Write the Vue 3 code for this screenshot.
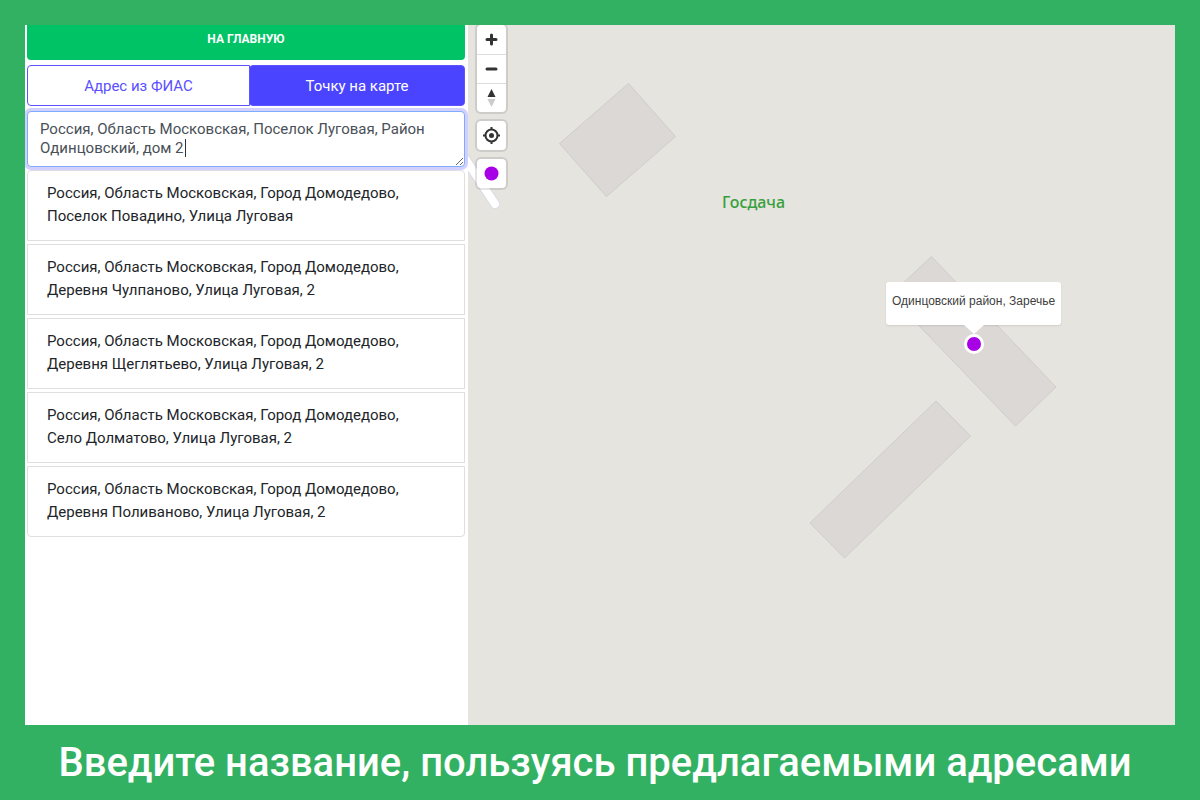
<script setup>
import { ref } from 'vue'

const query = ref('Россия, Область Московская, Поселок Луговая, Район Одинцовский, дом 2')
const mode = ref('map')
const modes = [
  { id: 'fias', label: 'Адрес из ФИАС' },
  { id: 'map', label: 'Точку на карте' },
]
const suggestions = [
  'Россия, Область Московская, Город Домодедово, Поселок Повадино, Улица Луговая',
  'Россия, Область Московская, Город Домодедово, Деревня Чулпаново, Улица Луговая, 2',
  'Россия, Область Московская, Город Домодедово, Деревня Щеглятьево, Улица Луговая, 2',
  'Россия, Область Московская, Город Домодедово, Село Долматово, Улица Луговая, 2',
  'Россия, Область Московская, Город Домодедово, Деревня Поливаново, Улица Луговая, 2',
]
</script>

<template>
  <div class="page">
    <main class="screen">
      <section class="panel">
        <button type="button" class="home">На главную</button>
        <div class="modes">
          <button
            v-for="m in modes"
            :key="m.id"
            type="button"
            class="mode"
            :class="{ active: mode === m.id }"
            :aria-pressed="mode === m.id"
            @click="mode = m.id"
          >{{ m.label }}</button>
        </div>
        <div class="field">
          <textarea v-model="query" class="query" aria-label="Адрес" rows="2" spellcheck="false"></textarea>
          <span class="caret"></span>
        </div>
        <ul class="list">
          <li v-for="s in suggestions" :key="s">
            <button type="button" class="suggestion" @click="query = s">{{ s }}</button>
          </li>
        </ul>
      </section>

      <section class="map" aria-label="Карта">
        <svg class="shapes" width="707" height="700" viewBox="0 0 707 700" aria-hidden="true">
          <path d="M-8 126 27 179" stroke="#dddbe8" stroke-width="10" stroke-linecap="round" />
          <path d="M-8 126 27 179" stroke="#fff" stroke-width="8" stroke-linecap="round" />
          <g fill="#dcd8d5" stroke="#cfcdca" stroke-width="1">
            <path d="M160.500 58.500 207.500 111.500 138.500 171.500 91.500 118.500Z" />
            <path d="M463.500 231.500 588 362 547.500 401 422 270.500Z" />
            <path d="M468 376 502.500 411 376.500 533 342 498Z" />
          </g>
        </svg>
        <span class="place">Госдача</span>

        <div class="controls">
          <div class="group top">
            <button type="button" aria-label="Приблизить">
              <svg width="29" height="29" viewBox="0 0 29 29"><path d="M14.500 10v9M10 14.500h9" stroke="#333" stroke-width="3" stroke-linecap="round" /></svg>
            </button>
            <button type="button" aria-label="Отдалить">
              <svg width="29" height="28" viewBox="0 0 29 28"><path d="M10 14h9" stroke="#333" stroke-width="3" stroke-linecap="round" /></svg>
            </button>
            <button type="button" aria-label="На север">
              <svg width="29" height="28" viewBox="0 0 29 28"><path d="M10.500 13 14.500 5l4 8Z" fill="#333" /><path d="M10.500 15h8l-4 8Z" fill="#ccc" /></svg>
            </button>
          </div>
          <div class="group">
            <button type="button" aria-label="Моё местоположение">
              <svg width="29" height="29" viewBox="0 0 29 29" fill="none" stroke="#333" stroke-width="2"><circle cx="14.500" cy="14.500" r="6" /><circle cx="14.500" cy="14.500" r="2.500" fill="#333" stroke="none" /><path d="M14.500 6v3M14.500 20v3M6 14.500h3M20 14.500h3" /></svg>
            </button>
          </div>
          <div class="group">
            <button type="button" aria-label="Поставить точку">
              <svg width="29" height="29" viewBox="0 0 29 29"><circle cx="14.500" cy="14.500" r="7" fill="#a800e6" /></svg>
            </button>
          </div>
        </div>

        <div class="marker">
          <div class="popup">Одинцовский район, Заречье</div>
          <span class="tip"></span>
          <span class="dot"></span>
        </div>
      </section>
    </main>
    <h1 class="caption">Введите название, пользуясь предлагаемыми адресами</h1>
  </div>
</template>

<style>
body {
  margin: 0;
}
</style>

<style scoped>
* {
  box-sizing: border-box;
}
.page {
  display: flex;
  flex-direction: column;
  min-height: 100vh;
  padding: 25px 25px 0;
  background: #33b163;
  font-family: Roboto, "Noto Sans", sans-serif;
}
.screen {
  flex: 1;
  display: flex;
  overflow: hidden;
  background: #fff;
}
.panel {
  flex: 0 0 443px;
  padding: 0 3px 0 2px;
}
button {
  margin: 0;
  font-family: inherit;
  cursor: pointer;
}
.home {
  display: block;
  width: 100%;
  height: 35px;
  padding: 0 0 8px;
  border: 0;
  border-radius: 0 0 4px 4px;
  background: #00c365;
  color: #fff;
  font-size: 12px;
  font-weight: 700;
  text-transform: uppercase;
}
.modes {
  display: flex;
  margin-top: 5px;
}
.mode {
  flex: 0 0 223px;
  height: 41px;
  padding: 0;
  border: 1px solid #5c55ff;
  border-radius: 4px 0 0 4px;
  background: #fff;
  color: #5a50ff;
  font-size: 15px;
}
.mode.active {
  flex: 1;
  margin-left: -1px;
  border-radius: 4px;
  background: #4a43ff;
  color: #fff;
}
.field {
  position: relative;
  margin-top: 5px;
}
.query {
  display: block;
  width: 100%;
  height: 56px;
  margin: 0;
  padding: 8px 12px;
  border: 1px solid #80acff;
  border-radius: 4px;
  outline: 0;
  box-shadow: 0 0 0 3px #d1d0ff;
  background: #fff;
  color: #495057;
  font: 15px/19px Roboto, "Noto Sans", sans-serif;
  overflow: hidden;
  resize: both;
}
.caret {
  position: absolute;
  left: 158px;
  top: 28px;
  width: 1px;
  height: 18px;
  background: #333;
}
.list {
  display: flex;
  flex-direction: column;
  gap: 3px;
  margin: 3px 0 0;
  padding: 0;
  list-style: none;
}
.suggestion {
  display: block;
  width: 100%;
  padding: 11px 40px 12px 19px;
  border: 1px solid #dfdfdf;
  background: #fff;
  color: #212529;
  font-size: 15px;
  line-height: 23px;
  text-align: left;
}
.list li:first-child .suggestion {
  border-radius: 4px 4px 0 0;
}
.list li:last-child .suggestion {
  border-radius: 0 0 4px 4px;
}
.map {
  position: relative;
  flex: 1;
  overflow: hidden;
  background: #e5e4df;
}
.shapes {
  position: absolute;
  left: 0;
  top: 0;
  fill: none;
}
.place {
  position: absolute;
  left: 254px;
  top: 167px;
  color: #37a03c;
  font: 500 16px/20px "Noto Sans", sans-serif;
}
.controls {
  position: absolute;
  left: 9px;
  top: 0;
  display: flex;
  flex-direction: column;
  gap: 9px;
}
.group {
  width: 29px;
  border-radius: 4px;
  background: #fff;
  box-shadow: 0 0 0 2px rgba(0, 0, 0, 0.1);
  overflow: hidden;
}
.group button {
  display: block;
  width: 29px;
  height: 29px;
  padding: 0;
  border: 0;
  background: transparent;
}
.group button + button {
  border-top: 1px solid #ddd;
}
.group svg {
  display: block;
}
.marker {
  position: absolute;
  left: 418px;
  top: 257px;
  display: flex;
  flex-direction: column;
  align-items: center;
}
.popup {
  padding: 10px 6px 15px;
  border-radius: 3px;
  background: #fff;
  box-shadow: 0 1px 2px rgba(0, 0, 0, 0.1);
  color: #404040;
  font: 12px/18px "Liberation Sans", Arial, sans-serif;
  white-space: nowrap;
}
.tip {
  border: 10px solid transparent;
  border-top: 9px solid #fff;
  border-bottom: 0;
}
.dot {
  width: 20px;
  height: 20px;
  border: 3px solid #fff;
  border-radius: 50%;
  background: #a800e6;
}
.caption {
  margin: 0;
  padding-right: 10px;
  color: #fff;
  font-size: 40px;
  font-weight: 500;
  line-height: 75px;
  text-align: center;
}
</style>
